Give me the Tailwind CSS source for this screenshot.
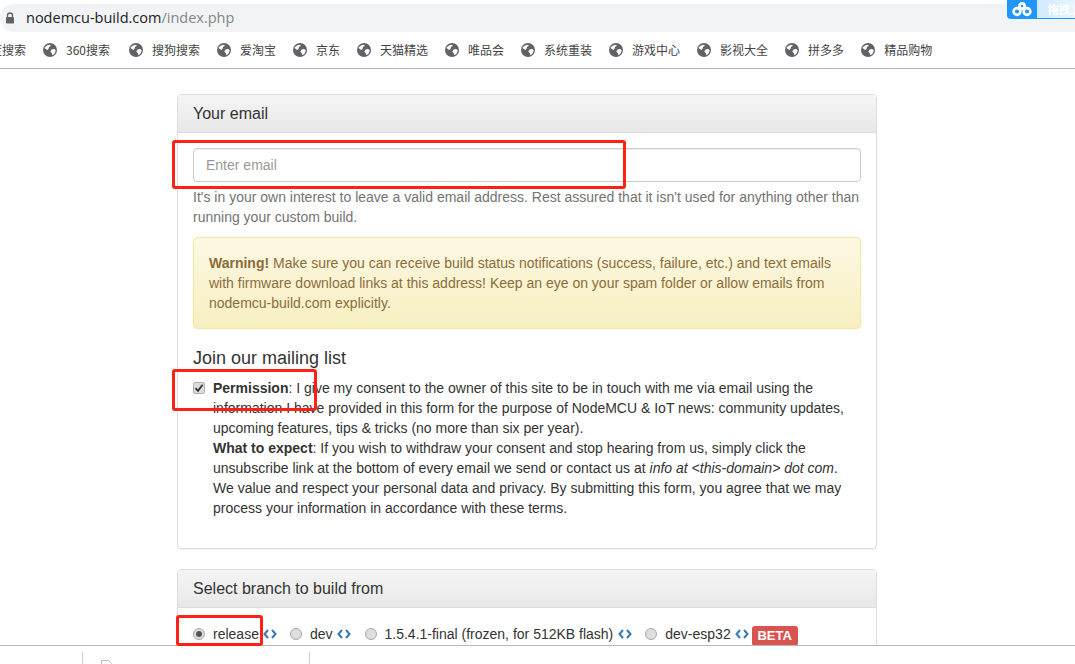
<!DOCTYPE html>
<html lang="en">
<head>
  <meta charset="UTF-8" />
  <title>NodeMCU custom builds</title>
  <script src="https://cdn.jsdelivr.net/npm/@tailwindcss/browser@4"></script>
</head>
<body class="relative w-[1075px] h-[664px] overflow-hidden bg-white flex flex-col text-[14px] leading-[20px] text-[#333] font-['Liberation_Sans',sans-serif]">

  <!-- Browser address bar -->
  <div class="h-[32px] pt-[4px] shrink-0">
    <div class="h-[28px] bg-[#f1f3f4] rounded-l-[14px] flex items-center pl-[5px] gap-[11px] font-['Open_Sans',sans-serif] text-[14.5px]">
      <svg class="w-[10px] h-[12px]" viewBox="0 0 10 12"><path d="M2.5 5V3.5a2.5 2.5 0 0 1 5 0V5" fill="none" stroke="#5f6368" stroke-width="1.3"/><rect x="1" y="5" width="8" height="6.5" rx="1" fill="#5f6368"/></svg>
      <span class="text-[#202124]">nodemcu-build.com<span class="text-[#80868b]">/index.php</span></span>
    </div>
  </div>

  <!-- Bookmarks -->
  <div class="h-[37px] shrink-0 border-b border-[#b4b4b4] flex items-center pb-[1px] text-[12px] text-[#444] font-['Noto_Sans_CJK_SC',sans-serif] whitespace-nowrap">
    <span class="w-[26px] overflow-hidden flex justify-end mr-[17px]"><span class="shrink-0">百度搜索</span></span>
    <div class="flex items-center gap-[17px]">
      <span class="flex items-center gap-[9px] mr-[2px]"><svg class="w-[14px] h-[14px]" viewBox="0 0 14 14"><circle cx="7" cy="7" r="7" fill="#5f6368"/><path d="M1.5 4.5 4 2.5l3-.7.8 1.2-1.7.8-.3 1.4L4.5 7 2 5.5zM8.5 6.5l2.7-.5 1.5 1.2-.8 3-2.3 2-1-2.2-1.2-1.5z" fill="#fff"/></svg>360搜索</span>
      <span class="flex items-center gap-[9px]"><svg class="w-[14px] h-[14px]" viewBox="0 0 14 14"><circle cx="7" cy="7" r="7" fill="#5f6368"/><path d="M1.5 4.5 4 2.5l3-.7.8 1.2-1.7.8-.3 1.4L4.5 7 2 5.5zM8.5 6.5l2.7-.5 1.5 1.2-.8 3-2.3 2-1-2.2-1.2-1.5z" fill="#fff"/></svg>搜狗搜索</span>
      <span class="flex items-center gap-[9px]"><svg class="w-[14px] h-[14px]" viewBox="0 0 14 14"><circle cx="7" cy="7" r="7" fill="#5f6368"/><path d="M1.5 4.5 4 2.5l3-.7.8 1.2-1.7.8-.3 1.4L4.5 7 2 5.5zM8.5 6.5l2.7-.5 1.5 1.2-.8 3-2.3 2-1-2.2-1.2-1.5z" fill="#fff"/></svg>爱淘宝</span>
      <span class="flex items-center gap-[9px]"><svg class="w-[14px] h-[14px]" viewBox="0 0 14 14"><circle cx="7" cy="7" r="7" fill="#5f6368"/><path d="M1.5 4.5 4 2.5l3-.7.8 1.2-1.7.8-.3 1.4L4.5 7 2 5.5zM8.5 6.5l2.7-.5 1.5 1.2-.8 3-2.3 2-1-2.2-1.2-1.5z" fill="#fff"/></svg>京东</span>
      <span class="flex items-center gap-[9px]"><svg class="w-[14px] h-[14px]" viewBox="0 0 14 14"><circle cx="7" cy="7" r="7" fill="#5f6368"/><path d="M1.5 4.5 4 2.5l3-.7.8 1.2-1.7.8-.3 1.4L4.5 7 2 5.5zM8.5 6.5l2.7-.5 1.5 1.2-.8 3-2.3 2-1-2.2-1.2-1.5z" fill="#fff"/></svg>天猫精选</span>
      <span class="flex items-center gap-[9px]"><svg class="w-[14px] h-[14px]" viewBox="0 0 14 14"><circle cx="7" cy="7" r="7" fill="#5f6368"/><path d="M1.5 4.5 4 2.5l3-.7.8 1.2-1.7.8-.3 1.4L4.5 7 2 5.5zM8.5 6.5l2.7-.5 1.5 1.2-.8 3-2.3 2-1-2.2-1.2-1.5z" fill="#fff"/></svg>唯品会</span>
      <span class="flex items-center gap-[9px]"><svg class="w-[14px] h-[14px]" viewBox="0 0 14 14"><circle cx="7" cy="7" r="7" fill="#5f6368"/><path d="M1.5 4.5 4 2.5l3-.7.8 1.2-1.7.8-.3 1.4L4.5 7 2 5.5zM8.5 6.5l2.7-.5 1.5 1.2-.8 3-2.3 2-1-2.2-1.2-1.5z" fill="#fff"/></svg>系统重装</span>
      <span class="flex items-center gap-[9px]"><svg class="w-[14px] h-[14px]" viewBox="0 0 14 14"><circle cx="7" cy="7" r="7" fill="#5f6368"/><path d="M1.5 4.5 4 2.5l3-.7.8 1.2-1.7.8-.3 1.4L4.5 7 2 5.5zM8.5 6.5l2.7-.5 1.5 1.2-.8 3-2.3 2-1-2.2-1.2-1.5z" fill="#fff"/></svg>游戏中心</span>
      <span class="flex items-center gap-[9px]"><svg class="w-[14px] h-[14px]" viewBox="0 0 14 14"><circle cx="7" cy="7" r="7" fill="#5f6368"/><path d="M1.5 4.5 4 2.5l3-.7.8 1.2-1.7.8-.3 1.4L4.5 7 2 5.5zM8.5 6.5l2.7-.5 1.5 1.2-.8 3-2.3 2-1-2.2-1.2-1.5z" fill="#fff"/></svg>影视大全</span>
      <span class="flex items-center gap-[9px]"><svg class="w-[14px] h-[14px]" viewBox="0 0 14 14"><circle cx="7" cy="7" r="7" fill="#5f6368"/><path d="M1.5 4.5 4 2.5l3-.7.8 1.2-1.7.8-.3 1.4L4.5 7 2 5.5zM8.5 6.5l2.7-.5 1.5 1.2-.8 3-2.3 2-1-2.2-1.2-1.5z" fill="#fff"/></svg>拼多多</span>
      <span class="flex items-center gap-[9px]"><svg class="w-[14px] h-[14px]" viewBox="0 0 14 14"><circle cx="7" cy="7" r="7" fill="#5f6368"/><path d="M1.5 4.5 4 2.5l3-.7.8 1.2-1.7.8-.3 1.4L4.5 7 2 5.5zM8.5 6.5l2.7-.5 1.5 1.2-.8 3-2.3 2-1-2.2-1.2-1.5z" fill="#fff"/></svg>精品购物</span>
    </div>
  </div>

  <!-- Page -->
  <main class="flex-1 min-h-0 overflow-hidden pt-[25px] pl-[177px]">
    <div class="w-[700px]">

      <!-- Your email -->
      <section class="border border-[#ddd] rounded-[4px] shadow-[0_1px_1px_rgba(0,0,0,0.05)] mb-[20px]">
        <div class="h-[38px] border-b border-[#ddd] rounded-t-[3px] bg-gradient-to-b from-[#f5f5f5] to-[#e8e8e8] px-[15px] flex items-center text-[16px]">Your email</div>
        <div class="p-[15px]">
          <div class="h-[34px] border border-[#ccc] rounded-[4px] px-[12px] flex items-center text-[#999] shadow-[inset_0_1px_1px_rgba(0,0,0,0.075)]">Enter email</div>
          <p class="mt-[5px] mb-[10px] text-[#737373]">It's in your own interest to leave a valid email address. Rest assured that it isn't used for anything other than<br />running your custom build.</p>
          <div class="h-[92px] border border-[#f5e79e] rounded-[4px] bg-gradient-to-b from-[#fcf8e3] to-[#f8efc0] p-[15px] text-[#8a6d3b]">
            <b>Warning!</b> Make sure you can receive build status notifications (success, failure, etc.) and text emails<br />with firmware download links at this address! Keep an eye on your spam folder or allow emails from<br />nodemcu-build.com explicitly.
          </div>
          <h4 class="mt-[19px] mb-[10px] text-[18px] leading-[20px]">Join our mailing list</h4>
          <div class="flex">
            <span class="w-[12px] h-[12px] mt-[4px] mr-[8px] shrink-0 rounded-[2px] border border-[#b0b0b0] bg-[#dcdcdc] flex items-center justify-center">
              <svg class="w-[10px] h-[10px]" viewBox="0 0 10 10"><path d="M1.5 5.2 4 7.8 8.6 1.8" fill="none" stroke="#333" stroke-width="1.8"/></svg>
            </span>
            <p>
              <b>Permission</b>: I give my consent to the owner of this site to be in touch with me via email using the<br />
              information I have provided in this form for the purpose of NodeMCU &amp; IoT news: community updates,<br />
              upcoming features, tips &amp; tricks (no more than six per year).<br />
              <b>What to expect</b>: If you wish to withdraw your consent and stop hearing from us, simply click the<br />
              unsubscribe link at the bottom of every email we send or contact us at <i>info at &lt;this-domain&gt; dot com</i>.<br />
              We value and respect your personal data and privacy. By submitting this form, you agree that we may<br />
              process your information in accordance with these terms.
            </p>
          </div>
          <div class="h-[15px]"></div>
        </div>
      </section>

      <!-- Branch -->
      <section class="border border-[#ddd] rounded-[4px]">
        <div class="h-[38px] border-b border-[#ddd] rounded-t-[3px] bg-gradient-to-b from-[#f5f5f5] to-[#e8e8e8] px-[15px] flex items-center text-[16px]">Select branch to build from</div>
        <div class="p-[15px] flex items-center h-[52px] whitespace-nowrap">
          <span class="w-[12px] h-[12px] mr-[8px] rounded-full border border-[#a8a8a8] bg-[#dedede] flex items-center justify-center"><span class="w-[6px] h-[6px] rounded-full bg-[#555]"></span></span>
          <span>release</span>
          <svg class="w-[14px] h-[10px] ml-[4px] mr-[13px]" viewBox="0 0 14 10"><path d="M5 1 1.5 5 5 9M9 1l3.5 4L9 9" fill="none" stroke="#337ab7" stroke-width="2"/></svg>
          <span class="w-[12px] h-[12px] mr-[8px] rounded-full border border-[#a8a8a8] bg-[#dedede]"></span>
          <span>dev</span>
          <svg class="w-[14px] h-[10px] ml-[4px] mr-[14px]" viewBox="0 0 14 10"><path d="M5 1 1.5 5 5 9M9 1l3.5 4L9 9" fill="none" stroke="#337ab7" stroke-width="2"/></svg>
          <span class="w-[12px] h-[12px] mr-[8px] rounded-full border border-[#a8a8a8] bg-[#dedede]"></span>
          <span>1.5.4.1-final (frozen, for 512KB flash)</span>
          <svg class="w-[14px] h-[10px] ml-[5px] mr-[13px]" viewBox="0 0 14 10"><path d="M5 1 1.5 5 5 9M9 1l3.5 4L9 9" fill="none" stroke="#337ab7" stroke-width="2"/></svg>
          <span class="w-[12px] h-[12px] mr-[8px] rounded-full border border-[#a8a8a8] bg-[#dedede]"></span>
          <span>dev-esp32</span>
          <svg class="w-[14px] h-[10px] ml-[4px] mr-[3px]" viewBox="0 0 14 10"><path d="M5 1 1.5 5 5 9M9 1l3.5 4L9 9" fill="none" stroke="#337ab7" stroke-width="2"/></svg>
          <span class="w-[46px] h-[20px] mt-[4px] rounded-[3px] bg-[#d9534f] text-white font-bold text-[13px] flex items-center justify-center">BETA</span>
        </div>
      </section>
    </div>
  </main>

  <!-- Download shelf -->
  <div class="absolute left-0 right-0 bottom-0 h-[19px] bg-white border-t border-[#b8b8b8] flex pt-[6px]">
    <div class="w-[83px] border-r border-[#d0d0d0]"></div>
    <div class="w-[227px] border-r border-[#d0d0d0] pl-[18px] pt-[8px]">
      <svg class="w-[11px] h-[5px] block" viewBox="0 0 11 5"><path d="M.5 5V.5h7l3 3V5" fill="none" stroke="#bbb"/></svg>
    </div>
  </div>

  <!-- Cloud-drive widget -->
  <div class="absolute top-0 right-0 w-[68px] h-[19px] rounded-bl-[4px] bg-[#2196fb] pb-[1px] flex">
    <div class="w-[30px] flex items-center justify-center">
      <svg class="w-[20px] h-[15px]" viewBox="0 0 20 15"><g fill="none" stroke="#fff" stroke-width="2.6"><circle cx="5" cy="9.5" r="3.4"/><circle cx="15" cy="9.5" r="3.4"/><circle cx="10" cy="4" r="2.6"/></g></svg>
    </div>
    <div class="flex-1 bg-gradient-to-r from-[#cfeaff] to-[#e8f5ff] text-white font-bold text-[11px] leading-[18px] pl-[11px] overflow-hidden whitespace-nowrap blur-[0.5px] font-['Noto_Sans_CJK_SC',sans-serif]">拖拽上传</div>
  </div>

  <!-- Red annotations -->
  <div class="absolute left-[172px] top-[140px] w-[454px] h-[49px] border-[3px] border-[#ff2016] rounded-[3px]"></div>
  <div class="absolute left-[172px] top-[369px] w-[145px] h-[42px] border-[3px] border-[#ff2016] rounded-[3px]"></div>
  <div class="absolute left-[176px] top-[615px] w-[87px] h-[31px] border-[3px] border-[#ff2016] rounded-[3px]"></div>
</body>
</html>
